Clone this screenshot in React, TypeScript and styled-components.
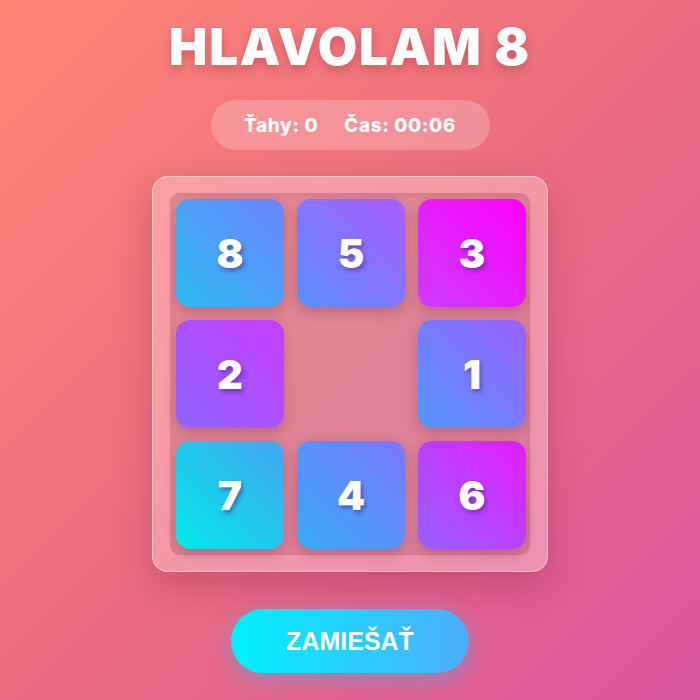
import React from 'react';
import styled, { createGlobalStyle } from 'styled-components';

const GlobalStyle = createGlobalStyle`
  html, body {
    margin: 0;
    padding: 0;
  }
  body {
    font-family: Inter, "Noto Sans", sans-serif;
  }
`;

const Page = styled.div`
  width: 700px;
  height: 700px;
  box-sizing: border-box;
  overflow: hidden;
  display: flex;
  flex-direction: column;
  align-items: center;
  padding-top: 17px;
  background: linear-gradient(135deg, #ff8576 0%, #ec6d80 50%, #d9579f 100%);
`;

const Title = styled.h1`
  margin: 0;
  font-family: Inter, sans-serif;
  font-weight: 900;
  font-size: 51px;
  line-height: 60px;
  letter-spacing: 1.8px;
  color: #ffffff;
  text-shadow: 0 5px 10px rgba(120, 30, 50, 0.3);
`;

const Stats = styled.div`
  margin-top: 23px;
  height: 50px;
  width: 279px;
  box-sizing: border-box;
  border-radius: 25px;
  background: rgba(255, 255, 255, 0.22);
  display: flex;
  align-items: center;
  justify-content: center;
  gap: 26px;
  color: #ffffff;
  font-weight: 800;
  font-size: 19px;
  letter-spacing: 0.6px;
`;

const Board = styled.div`
  margin-top: 26px;
  width: 396px;
  height: 396px;
  box-sizing: border-box;
  padding: 16px 17px 17px;
  border-radius: 16px;
  background: rgba(255, 220, 225, 0.4);
  border: 1.5px solid rgba(255, 235, 238, 0.55);
  box-shadow: 0 14px 36px rgba(120, 30, 60, 0.3);
`;

const Grid = styled.div`
  display: grid;
  grid-template-columns: repeat(3, 108px);
  grid-template-rows: repeat(3, 108px);
  gap: 13px;
  padding: 6px;
  border-radius: 10px;
  background: rgba(150, 60, 80, 0.22);
  box-shadow: inset 0 2px 6px rgba(120, 30, 50, 0.12);
`;

const Tile = styled.div<{ $from: string; $to: string }>`
  border-radius: 14px;
  display: flex;
  align-items: center;
  justify-content: center;
  background: linear-gradient(45deg, ${(p) => p.$from} 0%, ${(p) => p.$to} 100%);
  box-shadow: 0 5px 12px rgba(110, 30, 70, 0.28);
  color: #ffffff;
  font-family: Inter, sans-serif;
  font-weight: 900;
  font-size: 40px;
  text-shadow: 2px 3px 4px rgba(60, 20, 110, 0.45);
`;

const Empty = styled.div``;

const Shuffle = styled.button`
  margin-top: 37px;
  width: 238px;
  height: 64px;
  border: none;
  border-radius: 32px;
  background: linear-gradient(90deg, #00f2fe 0%, #4facfe 100%);
  color: #ffffff;
  font-family: "Liberation Sans", Arial, sans-serif;
  font-weight: 700;
  font-size: 25px;
  box-shadow: 0 6px 22px rgba(0, 200, 255, 0.35);
  cursor: pointer;
`;

type Cell = { n: number; from: string; to: string } | null;

const cells: Cell[] = [
  { n: 8, from: '#2cbcee', to: '#6c84ff' },
  { n: 5, from: '#5a8eff', to: '#ac5cff' },
  { n: 3, from: '#cc3cfc', to: '#ff00ff' },
  { n: 2, from: '#8c66ff', to: '#c83cff' },
  null,
  { n: 1, from: '#5296ff', to: '#9c60ff' },
  { n: 7, from: '#00e8e6', to: '#44a6f2' },
  { n: 4, from: '#36acf2', to: '#7c76ff' },
  { n: 6, from: '#9462ff', to: '#e41cff' },
];

export default function App() {
  return (
    <>
      <GlobalStyle />
      <Page>
        <Title>HLAVOLAM 8</Title>
        <Stats>
          <span>Ťahy: 0</span>
          <span>Čas: 00:06</span>
        </Stats>
        <Board>
          <Grid>
            {cells.map((c, i) =>
              c ? (
                <Tile key={i} $from={c.from} $to={c.to}>
                  {c.n}
                </Tile>
              ) : (
                <Empty key={i} />
              )
            )}
          </Grid>
        </Board>
        <Shuffle>ZAMIEŠAŤ</Shuffle>
      </Page>
    </>
  );
}
